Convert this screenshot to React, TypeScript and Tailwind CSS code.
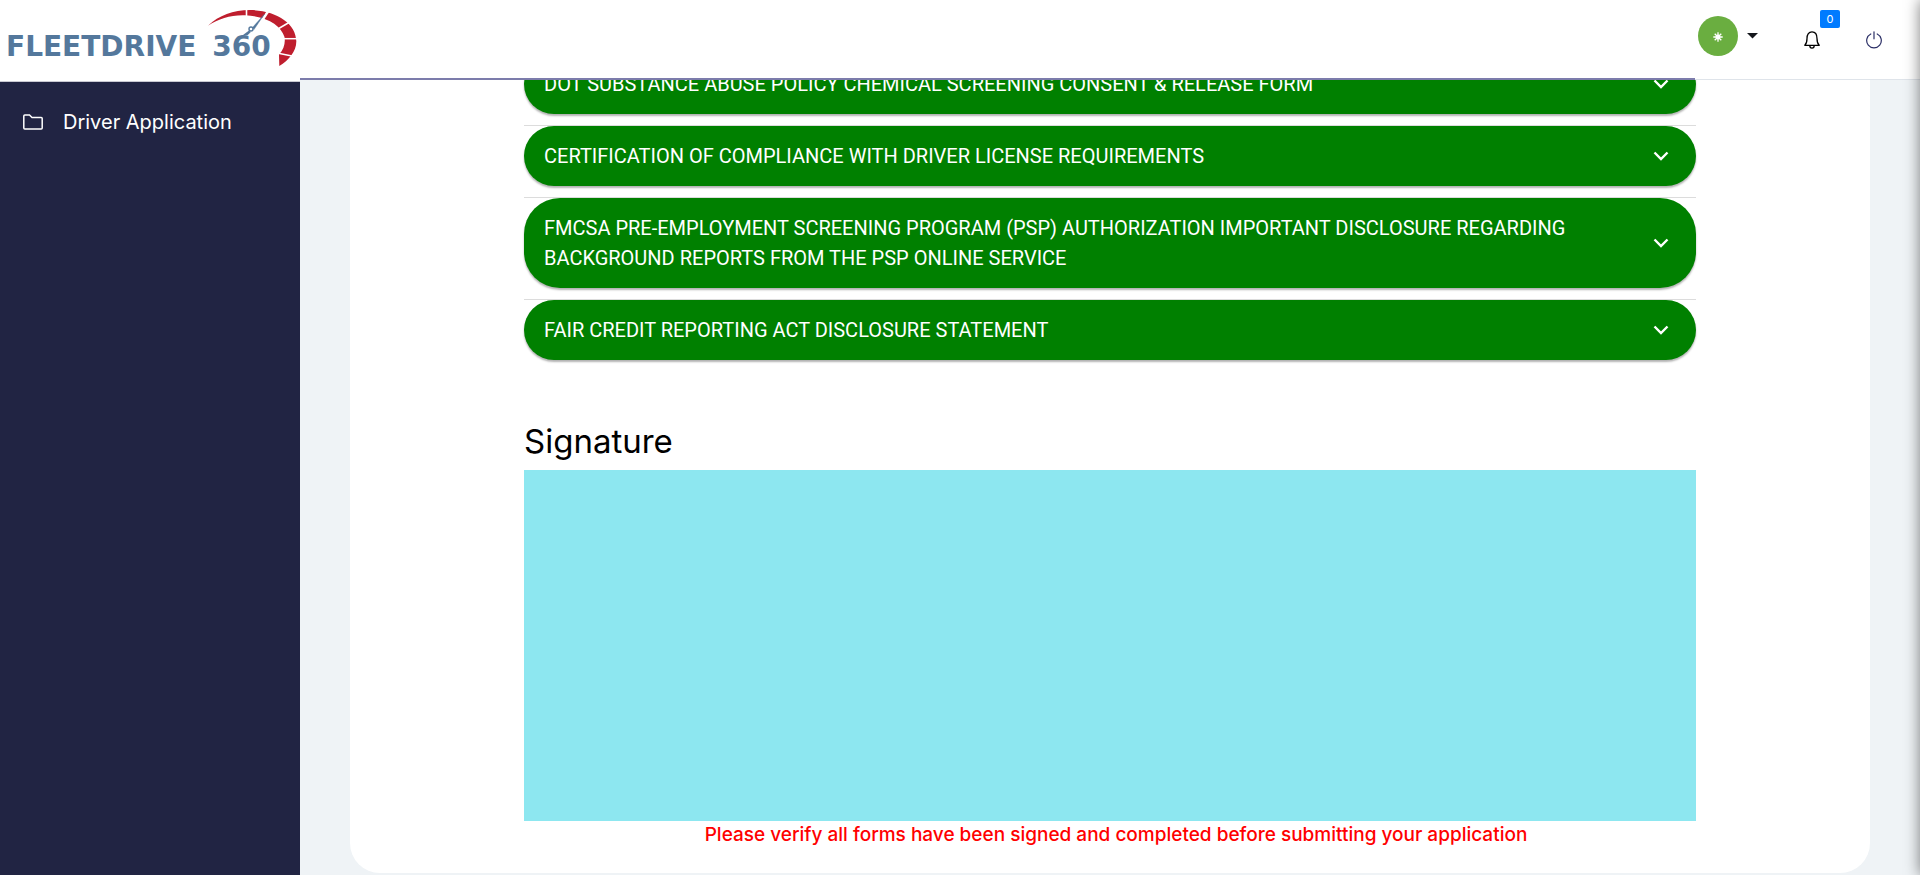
import React from "react";

const forms = [
  "DOT SUBSTANCE ABUSE POLICY CHEMICAL SCREENING CONSENT & RELEASE FORM",
  "CERTIFICATION OF COMPLIANCE WITH DRIVER LICENSE REQUIREMENTS",
  "FMCSA PRE-EMPLOYMENT SCREENING PROGRAM (PSP) AUTHORIZATION IMPORTANT DISCLOSURE REGARDING BACKGROUND REPORTS FROM THE PSP ONLINE SERVICE",
  "FAIR CREDIT REPORTING ACT DISCLOSURE STATEMENT",
];

function Gauge() {
  return (
    <svg aria-hidden="true" className="absolute top-2 left-[206px] h-[60px] w-[94px]" viewBox="206 8 94 60">
      <path
        d="M208 25.8C219 15.2 233 10 250 10c26 .5 46 13 46.300 31C296.500 51 289 60 279.300 66L279 54.500C284 49 285.500 43 284.500 37C281 25 266 16 245 15.300C231 14.800 219 18.500 208 25.800Z"
        fill="#bf1e2e"
      />
      <g stroke="#fff" fill="none">
        <path d="M246.500 8v10" strokeWidth="1.600" />
        <path d="M269 10l-8 12" strokeWidth="2.500" />
        <path d="M289 22.500l-12 7" strokeWidth="1.500" />
        <path d="M298 38.700h-16" strokeWidth="1.500" />
        <path d="M292 56l-15-3" strokeWidth="1.500" />
      </g>
      <path d="M264.500 14L252.500 27.500L254 29.500Z" fill="#54789c" stroke="#54789c" strokeWidth=".4" />
      <circle cx="251" cy="29" r="2" fill="#fff" stroke="#54789c" strokeWidth="1.400" />
      <path d="M249 30.500l1.800 1.500-3 3h-4.800z" fill="#54789c" />
    </svg>
  );
}

function Sidebar() {
  return (
    <aside className="flex w-[300px] shrink-0 flex-col bg-[#212443]">
      <a
        href="#home"
        className="relative flex h-[82px] items-center gap-4 border-b border-[#c9c9d2] bg-white pt-3 pl-[6px] font-['DejaVu_Sans'] text-[28px] leading-8 font-bold whitespace-nowrap text-[#54789c]"
      >
        <span>FLEETDRIVE</span>
        <span>360</span>
        <Gauge />
      </a>
      <nav className="pt-6">
        <a href="#application" className="flex h-8 items-center gap-5 pl-[23px] text-[20px] text-white">
          <svg aria-hidden="true" className="h-4 w-5" viewBox="0 0 20 16" fill="none" stroke="currentColor" strokeWidth="1.500">
            <path d="M.8 14V2q0-1 1-1H6.500L9 3.500h9.200q1 0 1 1V14q0 1-1 1H1.800q-1 0-1-1Z" />
          </svg>
          Driver Application
        </a>
      </nav>
    </aside>
  );
}

function Header() {
  return (
    <header className="relative z-10 flex h-20 shrink-0 items-start border-b border-[#dfe4ea] bg-white">
      <div className="absolute bottom-[-1px] left-0 h-[2px] w-[1395px] max-w-full bg-[#7c7cab]" />
      <div className="ml-auto flex items-start pt-4 pr-[38px]">
        <button aria-label="Account" className="flex items-center gap-[9px]">
          <span className="flex size-10 items-center justify-center rounded-full bg-[#6aae40]">
            <svg aria-hidden="true" className="mt-[2px] size-[10px]" viewBox="0 0 10 10" stroke="#fff" strokeWidth="1.300">
              <circle cx="5" cy="5" r="1.800" fill="#fff" />
              <path d="M5 .3v9.400M.3 5h9.400M1.700 1.700l6.600 6.600M8.300 1.700L1.700 8.300" />
            </svg>
          </span>
          <svg aria-hidden="true" className="h-[6px] w-[11px]" viewBox="0 0 11 6">
            <path d="M0 0h11L5.500 5.600z" fill="#14171c" />
          </svg>
        </button>
        <button aria-label="Notifications" className="relative mt-[15px] ml-[46px]">
          <svg className="h-[18px] w-4" viewBox="0 0 16 18" fill="none" stroke="#000" strokeWidth="1.300" strokeLinejoin="round">
            <path d="M.8 14.300C2.800 12.500 3 10.500 3 7.500C3 3.500 4.800.8 8 .8s5 2.700 5 6.700c0 3 .2 5 2.200 6.800Z" />
            <path d="M5.800 14.500a2.200 2.600 0 0 0 4.400 0" />
          </svg>
          <span className="absolute -top-[21px] left-4 flex h-[18px] w-5 items-center justify-center rounded-[2px] bg-[#007bff] text-[11px] text-white">
            0
          </span>
        </button>
        <button aria-label="Log out" className="mt-[15px] ml-[46px]">
          <svg className="h-[18px] w-4" viewBox="0 0 16 18" fill="none" stroke="#2b2f66" strokeWidth="1.200" strokeLinecap="round">
            <path d="M8 .8v7M4.800 3A7.300 7.300 0 1 0 11.200 3" />
          </svg>
        </button>
      </div>
    </header>
  );
}

function FormPanel({ title }: { title: string }) {
  return (
    <div className="border-t border-[#dcdcdc] pb-[11px]">
      <button className="flex w-full items-center justify-between rounded-[36px] bg-[green] py-[15px] pr-[25px] pl-5 text-left font-[Roboto] text-[20px] leading-[30px] text-white shadow-[0_2px_2px_rgba(0,0,0,0.3)]">
        <span className="max-w-[1060px]">{title}</span>
        <svg aria-hidden="true" className="h-[10px] w-5 shrink-0" viewBox="0 0 20 10" fill="none" stroke="#fff" strokeWidth="2.400">
          <path d="M3.500 1.500L10 8l6.500-6.500" />
        </svg>
      </button>
    </div>
  );
}

export default function App() {
  return (
    <div className="relative flex h-screen overflow-hidden bg-[#eff3f6] font-[Inter,sans-serif]">
      <Sidebar />
      <div className="flex min-w-0 flex-1 flex-col">
        <Header />
        <main className="-mt-[27px] px-[50px]">
          <section className="rounded-b-[30px] bg-white px-[174px] pb-[25px]">
            {forms.map((title) => (
              <FormPanel key={title} title={title} />
            ))}
            <h2 className="pt-[50px] pb-[9px] text-[33px] leading-10 text-black">Signature</h2>
            <canvas aria-label="Signature" className="block h-[351px] w-full bg-[#8de7f0]" />
            <p className="pl-3 text-center text-[19px] leading-[27px] font-medium text-[#f00]">
              Please verify all forms have been signed and completed before submitting your application
            </p>
          </section>
        </main>
      </div>
      <div className="absolute inset-y-0 -right-5 z-20 w-5 shadow-[0_0_15px_rgba(0,0,0,0.5)]" />
    </div>
  );
}
